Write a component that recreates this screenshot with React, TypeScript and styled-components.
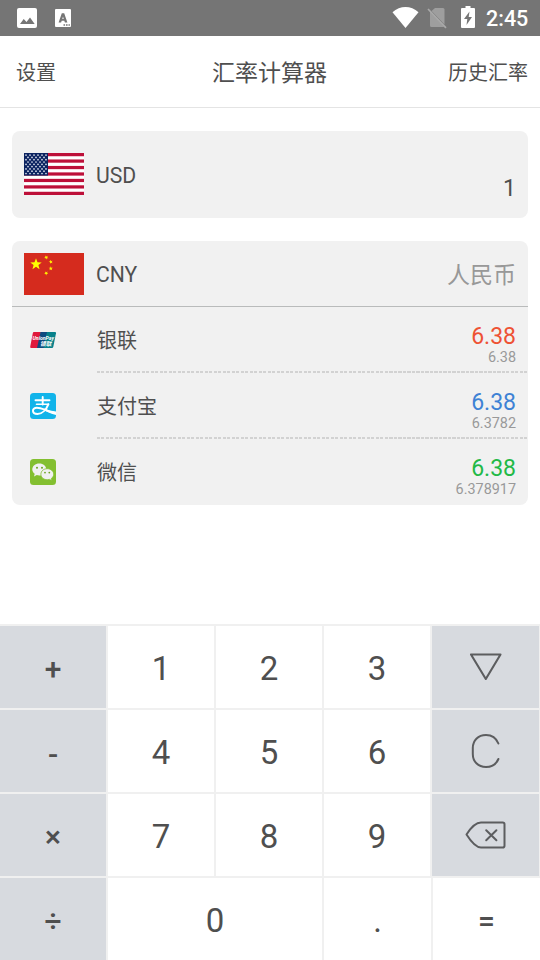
import React from "react";
import styled, { createGlobalStyle } from "styled-components";

const GlobalStyle = createGlobalStyle`
  * { box-sizing: border-box; }
  body { margin: 0; background: #fff; }
`;

const Screen = styled.div`
  width: 540px;
  height: 960px;
  display: flex;
  flex-direction: column;
  background: #fff;
  color: #4f4f4f;
  font-family: Roboto, "Noto Sans CJK SC", sans-serif;
  overflow: hidden;
`;

const StatusBar = styled.div`
  height: 36px;
  flex: none;
  background: #757575;
  color: #fff;
  display: flex;
  align-items: center;
  justify-content: space-between;
  padding: 0 12px 0 16px;
`;

const StatusGroup = styled.div`
  display: flex;
  align-items: center;
`;

const Clock = styled.span`
  font-size: 21.5px;
  font-weight: 500;
  line-height: 36px;
  padding-top: 2px;
  width: 42px;
  text-align: right;
  white-space: nowrap;
`;

const Header = styled.header`
  height: 72px;
  flex: none;
  display: grid;
  grid-template-columns: 1fr auto 1fr;
  align-items: center;
  padding: 0 12px 0 16px;
  border-bottom: 1px solid #e4e4e4;
`;

const HeaderLink = styled.span<{ $end?: boolean }>`
  font-size: 20px;
  line-height: 30px;
  padding-top: 3px;
  text-align: ${(p) => (p.$end ? "right" : "left")};
`;

const Title = styled.h1`
  margin: 0 5px 0 0;
  padding-top: 5px;
  font-size: 23px;
  font-weight: 400;
  line-height: 34px;
`;

const Cards = styled.main`
  flex: 1;
  display: flex;
  flex-direction: column;
  gap: 23px;
  padding: 23px 12px 0;
`;

const Card = styled.section`
  background: #f1f1f1;
  border-radius: 8px;
`;

const SourceRow = styled.div`
  height: 87px;
  display: flex;
  align-items: center;
  padding: 0 12px 1px;
`;

const TargetRow = styled.div`
  height: 66px;
  display: flex;
  align-items: center;
  padding: 0 12px;
  border-bottom: 1px solid #b9bbbb;
`;

const Code = styled.span<{ $drop: number }>`
  flex: 1;
  margin-left: 12px;
  font-size: 21.2px;
  line-height: 26px;
  padding-top: ${(p) => p.$drop}px;
`;

const Amount = styled.span`
  font-size: 23px;
  line-height: 28px;
  padding-top: 30px;
`;

const CurrencyName = styled.span`
  font-size: 23px;
  line-height: 34px;
  padding-top: 5px;
  color: #989898;
`;

const ChannelRow = styled.div`
  height: 66px;
  display: flex;
  align-items: center;
  padding-left: 18px;
`;

const ChannelBody = styled.div`
  flex: 1;
  height: 66px;
  margin-left: 41px;
  display: flex;
  justify-content: space-between;
  padding-right: 12px;
`;

const ChannelName = styled.span`
  font-size: 20px;
  line-height: 64px;
  padding-top: 2px;
`;

const Values = styled.div`
  display: flex;
  flex-direction: column;
  align-items: flex-end;
  padding-top: 16px;
`;

const Rate = styled.span<{ $color: string }>`
  font-size: 23px;
  line-height: 27px;
  color: ${(p) => p.$color};
`;

const Exact = styled.span`
  font-size: 14.4px;
  line-height: 16px;
  color: #999;
`;

const DashedLine = styled.div`
  height: 2px;
  margin: -2px 0 0 85px;
  background: repeating-linear-gradient(90deg, #d2d2d2 0 3px, #f1f1f1 3px 4.5px);
`;

const Keypad = styled.div`
  height: 336px;
  flex: none;
  background: #f0f0f0;
  padding-top: 2px;
  display: flex;
  flex-direction: column;
  gap: 2px;
`;

const KeyRow = styled.div<{ $columns: string }>`
  height: 82px;
  display: grid;
  grid-template-columns: ${(p) => p.$columns};
  column-gap: 2px;
`;

const Key = styled.button<{ $shade?: boolean }>`
  border: 0;
  margin: 0;
  padding: 3px 0 0;
  display: flex;
  align-items: center;
  justify-content: center;
  background: ${(p) => (p.$shade ? "#d7dadf" : "#fff")};
  color: inherit;
  font-family: inherit;
  font-size: 33px;
  line-height: 40px;
`;

const OperatorKey = styled(Key)<{ $drop?: number }>`
  padding-top: ${(p) => 4 + (p.$drop ?? 0)}px;
  font-size: 30px;
  font-weight: 500;
`;

const IconKey = styled(Key)`
  padding: 0 1px 0 0;
`;

const Svg = styled.svg`
  display: block;
  flex: none;
`;

const PictureIcon = () => (
  <Svg width="22" height="36" viewBox="0 0 22 36">
    <rect x="1" y="8" width="20" height="20" rx="2" fill="#fff" />
    <path d="M4 24l3.7-5 2.8 3 3.5-4.5 4.7 6.5z" fill="#757575" />
  </Svg>
);

const KeyboardIcon = () => (
  <Svg width="18" height="36" viewBox="0 0 18 36">
    <rect x="1" y="9" width="16" height="18" rx="1" fill="#fff" />
    <path
      fillRule="evenodd"
      d="M4.600 22.500L7.800 13.200h2.400l3.200 9.300h-2.500l-.6-1.800H7.700l-.6 1.800zM8.300 18.900h1.400L9 16.500z"
      fill="#757575"
    />
    <path d="M9.500 24.200h1.600v1.600H9.500zM12 24.200h1.600v1.600H12zM14.500 24.200h1.400v1.600h-1.400z" fill="#757575" />
  </Svg>
);

const Spacer = styled.span<{ $w: number }>`
  width: ${(p) => p.$w}px;
`;

const WifiIcon = () => (
  <Svg width="27" height="36" viewBox="0 0 27 36">
    <path d="M.5 12.300C8 5.300 19 5.300 26.500 12.300L13.500 28z" fill="#fff" />
  </Svg>
);

const NoSimIcon = () => (
  <Svg width="20" height="36" viewBox="0 0 20 36">
    <path d="M8 8h8a1.500 1.500 0 0 1 1.500 1.500v15L4.500 11z" fill="#9e9e9e" />
    <path d="M3 11.500L17 26.500l-1 .5H4.500A1.500 1.500 0 0 1 3 25.500z" fill="#9e9e9e" />
    <path d="M1 9l18 18.800" stroke="#a9a9a9" strokeWidth="1.700" />
  </Svg>
);

const BatteryIcon = () => (
  <Svg width="14" height="36" viewBox="0 0 14 36">
    <path d="M4.500 6h5v2H13q1 0 1 1v18q0 1-1 1H1q-1 0-1-1V9q0-1 1-1h3.500z" fill="#fff" />
    <path d="M8.500 11.500L3 19h3.300l-.8 6L11 17H7.700z" fill="#757575" />
  </Svg>
);

const starPoints = (cx: number, cy: number, r: number, turn = -90) =>
  Array.from({ length: 10 }, (_, i) => {
    const a = ((turn + i * 36) * Math.PI) / 180;
    const d = i % 2 ? r * 0.42 : r;
    return `${(cx + d * Math.cos(a)).toFixed(2)},${(cy + d * Math.sin(a)).toFixed(2)}`;
  }).join(" ");

const UsFlag = () => (
  <Svg width="60" height="42" viewBox="0 0 60 42">
    <rect width="60" height="42" fill="#fff" />
    {Array.from({ length: 7 }, (_, i) => (
      <rect key={i} y={(i * 2 * 42) / 13} width="60" height={42 / 13} fill="#bd1039" />
    ))}
    <rect width="24" height="22.6" fill="#0b2360" />
    {Array.from({ length: 9 }, (_, r) =>
      Array.from({ length: r % 2 ? 5 : 6 }, (_, c) => (
        <circle
          key={`${r}-${c}`}
          cx={2 + (r % 2) * 2 + c * 4}
          cy={2.1 + r * 2.3}
          r="0.85"
          fill="#dfe3ee"
        />
      ))
    )}
  </Svg>
);

const CnFlag = () => (
  <Svg width="60" height="42" viewBox="0 0 60 42">
    <rect width="60" height="42" fill="#d52b1e" />
    <polygon points={starPoints(12, 11.3, 6)} fill="#ffff00" />
    <polygon points={starPoints(22.3, 4.4, 2.2, 20)} fill="#fff000" />
    <polygon points={starPoints(26.8, 8.8, 2.2, 40)} fill="#fff000" />
    <polygon points={starPoints(26.8, 15.5, 2.2, -90)} fill="#fff000" />
    <polygon points={starPoints(22.2, 20.2, 2.2, 20)} fill="#fff000" />
  </Svg>
);

const UnionPayIcon = () => (
  <Svg width="26" height="26" viewBox="0 0 26 26">
    <path d="M4 5h7L8 21H1.200Q0 21 .2 19.700L2.800 6.200Q3 5 4 5z" fill="#e0183c" />
    <path d="M10.500 5h7L14 21H7z" fill="#0f4a80" />
    <path d="M17 5h8q1.200 0 1 1.200L23.300 19.800Q23 21 22 21h-8.500z" fill="#07808a" />
    <g fill="#fff" fontFamily="Roboto, 'Noto Sans CJK SC', sans-serif" fontStyle="italic" fontWeight="700">
      <text x="2.500" y="12.600" fontSize="5.800" textLength="21.500" lengthAdjust="spacingAndGlyphs">
        UnionPay
      </text>
      <text x="10" y="18.700" fontSize="5.800" textLength="11.500" lengthAdjust="spacingAndGlyphs">
        银联
      </text>
    </g>
  </Svg>
);

const AlipayIcon = () => (
  <Svg width="26" height="26" viewBox="0 0 26 26">
    <rect width="26" height="26" rx="3.500" fill="#12b4ea" />
    <g fill="none" stroke="#fff" strokeLinecap="round">
      <path d="M5.500 7.300h14M12.700 4v7.500" strokeWidth="1.900" />
      <path d="M6.500 11.300h12" strokeWidth="1.600" />
      <path
        d="M18.300 11.300C16.500 16 12.500 21 7.500 21c-5.800 0-6-6.200-.6-6.200 4.500 0 8 2.500 17 5"
        strokeWidth="2"
      />
    </g>
    <path d="M14 15.600c4 1.700 8 2.500 12 2.900v3.600c-5-1.300-9-3.300-13-5z" fill="#fff" />
  </Svg>
);

const WechatIcon = () => (
  <Svg width="26" height="26" viewBox="0 0 26 26">
    <rect width="26" height="26" rx="3.500" fill="#83bf30" />
    <path
      d="M9.300 4.500c4 0 7 2.600 7 6s-3 6-7 6c-.9 0-1.700-.1-2.500-.4L4 17.600l.7-2.800C3.200 13.700 2.300 12.200 2.300 10.500c0-3.400 3-6 7-6z"
      fill="#f1f1f1"
    />
    <path
      d="M17.300 9.700c3.700 0 6.400 2.500 6.400 5.500 0 1.700-.9 3.200-2.300 4.200l.5 2.200-2.400-1.200c-.7.2-1.400.3-2.200.3-3.700 0-6.400-2.400-6.400-5.500s2.700-5.500 6.400-5.500z"
      fill="#f1f1f1"
      stroke="#83bf30"
      strokeWidth=".8"
    />
    <g fill="#6ca522">
      <circle cx="7" cy="8.700" r="1" />
      <circle cx="12" cy="8.700" r="1" />
      <circle cx="15" cy="13.600" r=".9" />
      <circle cx="19.300" cy="13.600" r=".9" />
    </g>
  </Svg>
);

const strokeProps = {
  fill: "none",
  stroke: "#5c5d5f",
  strokeLinecap: "round" as const,
  strokeLinejoin: "round" as const,
};

const TriangleIcon = () => (
  <Svg width="40" height="40" viewBox="0 0 40 40" {...strokeProps}>
    <path d="M6 7.500h29.500L20.800 32z" strokeWidth="2.100" />
  </Svg>
);

const ClearIcon = () => (
  <Svg width="40" height="40" viewBox="0 0 40 40" {...strokeProps}>
    <path
      d="M33.400 12.500C31.300 7.300 26.500 4 21 4 13 4 7.800 9.500 7.800 17v6C7.800 30.500 13 36 21 36c5.500 0 10.300-3 12.400-8"
      strokeWidth="2"
    />
  </Svg>
);

const BackspaceIcon = () => (
  <Svg width="44" height="40" viewBox="0 0 44 40" {...strokeProps}>
    <path
      d="M18 7.500h21.700Q41.500 7.500 41.500 9.300V30.700Q41.500 32.500 39.700 32.500H18C12 32.500 7 25 3.500 19.500 7 14 12 7.500 18 7.500z"
      strokeWidth="2"
    />
    <path d="M23.200 15.200l10.200 10M33.400 15.200l-10.200 10" strokeWidth="2" />
  </Svg>
);

const channels = [
  { name: "银联", icon: <UnionPayIcon />, rate: "6.38", exact: "6.38", color: "#ee5234" },
  { name: "支付宝", icon: <AlipayIcon />, rate: "6.38", exact: "6.3782", color: "#3e82d5" },
  { name: "微信", icon: <WechatIcon />, rate: "6.38", exact: "6.378917", color: "#22b947" },
];

const keyRows = [
  { op: "+", drop: 0, digits: ["1", "2", "3"], icon: <TriangleIcon />, label: "收起" },
  { op: "-", drop: 3, digits: ["4", "5", "6"], icon: <ClearIcon />, label: "清除" },
  { op: "×", drop: 0, digits: ["7", "8", "9"], icon: <BackspaceIcon />, label: "删除" },
];

export default function App() {
  return (
    <>
      <GlobalStyle />
      <Screen>
        <StatusBar>
          <StatusGroup>
            <PictureIcon />
            <Spacer $w={16} />
            <KeyboardIcon />
          </StatusGroup>
          <StatusGroup>
            <WifiIcon />
            <Spacer $w={8} />
            <NoSimIcon />
            <Spacer $w={14} />
            <BatteryIcon />
            <Spacer $w={11} />
            <Clock>2:45</Clock>
          </StatusGroup>
        </StatusBar>

        <Header>
          <HeaderLink>设置</HeaderLink>
          <Title>汇率计算器</Title>
          <HeaderLink $end>历史汇率</HeaderLink>
        </Header>

        <Cards>
          <Card>
            <SourceRow>
              <UsFlag />
              <Code $drop={4}>USD</Code>
              <Amount>1</Amount>
            </SourceRow>
          </Card>
          <Card>
            <TargetRow>
              <CnFlag />
              <Code $drop={2}>CNY</Code>
              <CurrencyName>人民币</CurrencyName>
            </TargetRow>
            {channels.map((c, i) => (
              <React.Fragment key={c.name}>
                {i > 0 && <DashedLine />}
                <ChannelRow>
                  {c.icon}
                  <ChannelBody>
                    <ChannelName>{c.name}</ChannelName>
                    <Values>
                      <Rate $color={c.color}>{c.rate}</Rate>
                      <Exact>{c.exact}</Exact>
                    </Values>
                  </ChannelBody>
                </ChannelRow>
              </React.Fragment>
            ))}
          </Card>
        </Cards>

        <Keypad>
          {keyRows.map((row) => (
            <KeyRow key={row.op} $columns="106px 106px 106px 106px 107px">
              <OperatorKey $shade $drop={row.drop}>
                {row.op}
              </OperatorKey>
              {row.digits.map((d) => (
                <Key key={d}>{d}</Key>
              ))}
              <IconKey $shade aria-label={row.label}>
                {row.icon}
              </IconKey>
            </KeyRow>
          ))}
          <KeyRow $columns="106px 214px 107px 107px">
            <OperatorKey $shade>÷</OperatorKey>
            <Key>0</Key>
            <Key>.</Key>
            <OperatorKey>=</OperatorKey>
          </KeyRow>
        </Keypad>
      </Screen>
    </>
  );
}
